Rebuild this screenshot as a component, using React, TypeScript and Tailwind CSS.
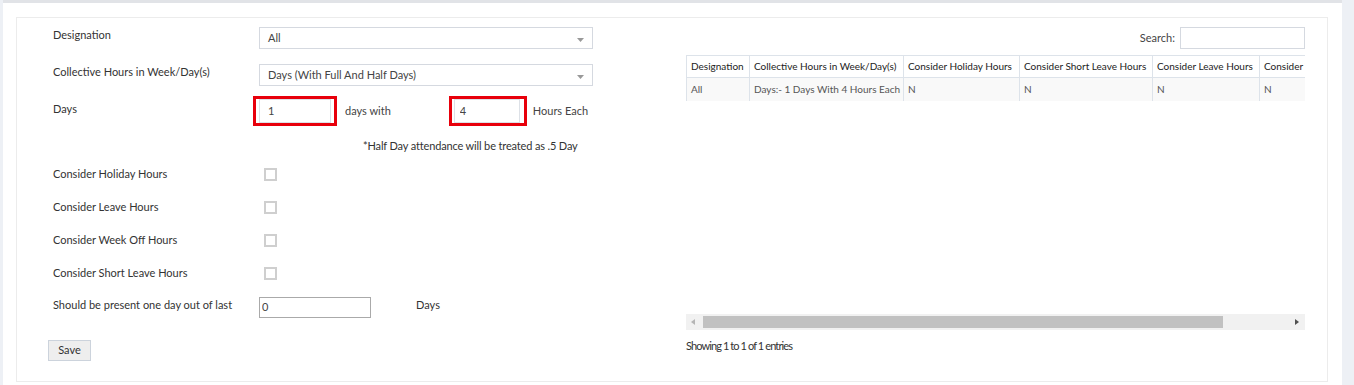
import React, { useState } from 'react';

const font = "font-['Lato','Open_Sans',sans-serif]";

const Caret: React.FC = () => (
    <svg width="7" height="4" viewBox="0 0 7 4" className="absolute right-[8px] top-[10px]">
        <path d="M0 0 H7 L3.5 4 Z" fill="#999" />
    </svg>
);

const FakeSelect: React.FC<{ value: string }> = ({ value }) => (
    <div className="relative w-[334px] h-[22px] border border-[#d5d9e0] bg-white pl-[8px] text-[11px] leading-[20px] text-[#444]">
        {value}
        <Caret />
    </div>
);

const CheckRow: React.FC<{ label: string; first?: boolean }> = ({ label, first }) => {
    const [checked, setChecked] = useState(false);
    return (
        <div className={`flex h-[16px] items-center ${first ? 'mt-[12px]' : 'mt-[17px]'}`}>
            <span className="w-[206px] text-[11px] leading-[16px] text-[#333]">{label}</span>
            <button
                type="button"
                onClick={() => setChecked(!checked)}
                className="ml-[5px] w-[13px] h-[13px] border-2 border-[#cfcfcf] bg-white"
            />
        </div>
    );
};

const columns = [
    { title: 'Designation', w: 'w-[63px]' },
    { title: 'Collective Hours in Week/Day(s)', w: 'w-[154px]' },
    { title: 'Consider Holiday Hours', w: 'w-[116px]' },
    { title: 'Consider Short Leave Hours', w: 'w-[133px]' },
    { title: 'Consider Leave Hours', w: 'w-[107px]' },
    { title: 'Consider Week Off Hours', w: 'w-[130px]' },
];

const row = ['All', 'Days:- 1 Days With 4 Hours Each', 'N', 'N', 'N', 'N'];

export default function App() {
    const [days, setDays] = useState('1');
    const [hours, setHours] = useState('4');
    const [last, setLast] = useState('0');

    return (
        <div className={`${font} h-[385px] w-[1354px] bg-[#edf0f5] pl-[3px] pr-[12px]`}>
            <div className="h-full bg-white border-t-[3px] border-[#e1e3e7] pt-[14px] pl-[13px] pr-[14px] pb-[3px]">
                <div className="flex h-full border border-[#ececec]">
                    {/* left form */}
                    <div className="w-[640px] pl-[36px] pt-[9px]">
                        <div className="flex h-[22px]">
                            <span className="w-[206px] text-[11px] leading-[16px] text-[#333]">Designation</span>
                            <FakeSelect value="All" />
                        </div>
                        <div className="flex h-[22px] mt-[15px]">
                            <span className="w-[206px] text-[11px] leading-[16px] text-[#333]">Collective Hours in Week/Day(s)</span>
                            <FakeSelect value="Days (With Full And Half Days)" />
                        </div>
                        <div className="flex h-[30px] mt-[10px] items-start">
                            <span className="w-[200px] pt-[5px] text-[11px] leading-[16px] text-[#333]">Days</span>
                            <div className="w-[84px] h-[30px] border-[3px] border-[#e8000b] pl-[3px]">
                                <div className="flex items-center w-[72px] h-[24px] border border-[#dde1e7] bg-white">
                                    <input
                                        value={days}
                                        onChange={(e) => setDays(e.target.value)}
                                        className="w-full h-[14px] leading-[14px] mb-[1px] pl-[8px] text-[11px] text-[#444] outline-none bg-transparent"
                                    />
                                </div>
                            </div>
                            <span className="ml-[8px] pt-[7px] text-[11px] leading-[16px] text-[#444]">days with</span>
                            <div className="ml-[58px] w-[78px] h-[30px] border-[3px] border-[#e8000b] pl-[2px]">
                                <div className="flex items-center w-[66px] h-[24px] border border-[#dde1e7] bg-white">
                                    <input
                                        value={hours}
                                        onChange={(e) => setHours(e.target.value)}
                                        className="w-full h-[14px] leading-[14px] mb-[1px] pl-[5px] text-[11px] text-[#444] outline-none bg-transparent"
                                    />
                                </div>
                            </div>
                            <span className="ml-[6px] pt-[7px] text-[11px] leading-[16px] text-[#444]">Hours Each</span>
                        </div>
                        <div className="mt-[12px] h-[16px] pl-[310px] text-[11px] leading-[16px] tracking-[-0.15px] text-[#333]">
                            *Half Day attendance will be treated as .5 Day
                        </div>
                        <CheckRow label="Consider Holiday Hours" first />
                        <CheckRow label="Consider Leave Hours" />
                        <CheckRow label="Consider Week Off Hours" />
                        <CheckRow label="Consider Short Leave Hours" />
                        <div className="flex h-[21px] mt-[16px] items-start">
                            <span className="w-[206px] text-[11px] leading-[16px] text-[#333]">Should be present one day out of last</span>
                            <div className="flex items-center w-[112px] h-[21px] border border-[#aaa] bg-white">
                                <input
                                    value={last}
                                    onChange={(e) => setLast(e.target.value)}
                                    className="w-full h-[14px] leading-[14px] mb-[1px] pl-[2px] text-[11px] text-[#444] outline-none bg-transparent"
                                />
                            </div>
                            <span className="ml-[45px] text-[11px] leading-[16px] text-[#333]">Days</span>
                        </div>
                        <button
                            type="button"
                            className="-ml-[5px] mt-[22px] w-[43px] h-[21px] border border-[#ccd3dc] bg-[#eeeeee] text-[11px] text-[#333]"
                        >
                            Save
                        </button>
                    </div>

                    {/* right table */}
                    <div className="w-[619px] ml-[29px] pt-[9px]">
                        <div className="flex h-[22px] items-center justify-end">
                            <span className="text-[11px] text-[#444] mr-[5px]">Search:</span>
                            <div className="w-[125px] h-[22px] border border-[#d5d9e0] bg-white">
                                <input className="w-full h-full outline-none bg-transparent" />
                            </div>
                        </div>
                        <div className="mt-[6px] h-[46px] overflow-hidden">
                            <table className="border-collapse table-fixed w-[703px] text-[10px]">
                                <thead>
                                    <tr className="h-[22px] bg-white">
                                        {columns.map((c) => (
                                            <th key={c.title} className={`${c.w} border border-[#dde3ea] px-[4px] text-left font-normal text-[#222] whitespace-nowrap`}>
                                                {c.title}
                                            </th>
                                        ))}
                                    </tr>
                                </thead>
                                <tbody>
                                    <tr className="h-[23px] bg-[#f9f9f9]">
                                        {row.map((v, i) => (
                                            <td key={i} className="border-x border-[#dde3ea] px-[4px] text-[#555] whitespace-nowrap">
                                                {v}
                                            </td>
                                        ))}
                                    </tr>
                                </tbody>
                            </table>
                        </div>
                        {/* fake horizontal scrollbar */}
                        <div className="mt-[213px] flex h-[16px] items-center bg-[#f1f1f1]">
                            <svg width="17" height="16" viewBox="0 0 17 16">
                                <path d="M9 5 L5 8 L9 11 Z" fill="#b5b5b5" />
                            </svg>
                            <div className="h-[12px] w-[520px] bg-[#c1c1c1]" />
                            <div className="flex-1" />
                            <svg width="17" height="16" viewBox="0 0 17 16">
                                <path d="M7 5 L11 8 L7 11 Z" fill="#505050" />
                            </svg>
                        </div>
                        <div className="mt-[8px] text-[11px] leading-[16px] tracking-[-0.9px] text-[#333]">
                            Showing 1 to 1 of 1 entries
                        </div>
                    </div>
                </div>
            </div>
        </div>
    );
}
